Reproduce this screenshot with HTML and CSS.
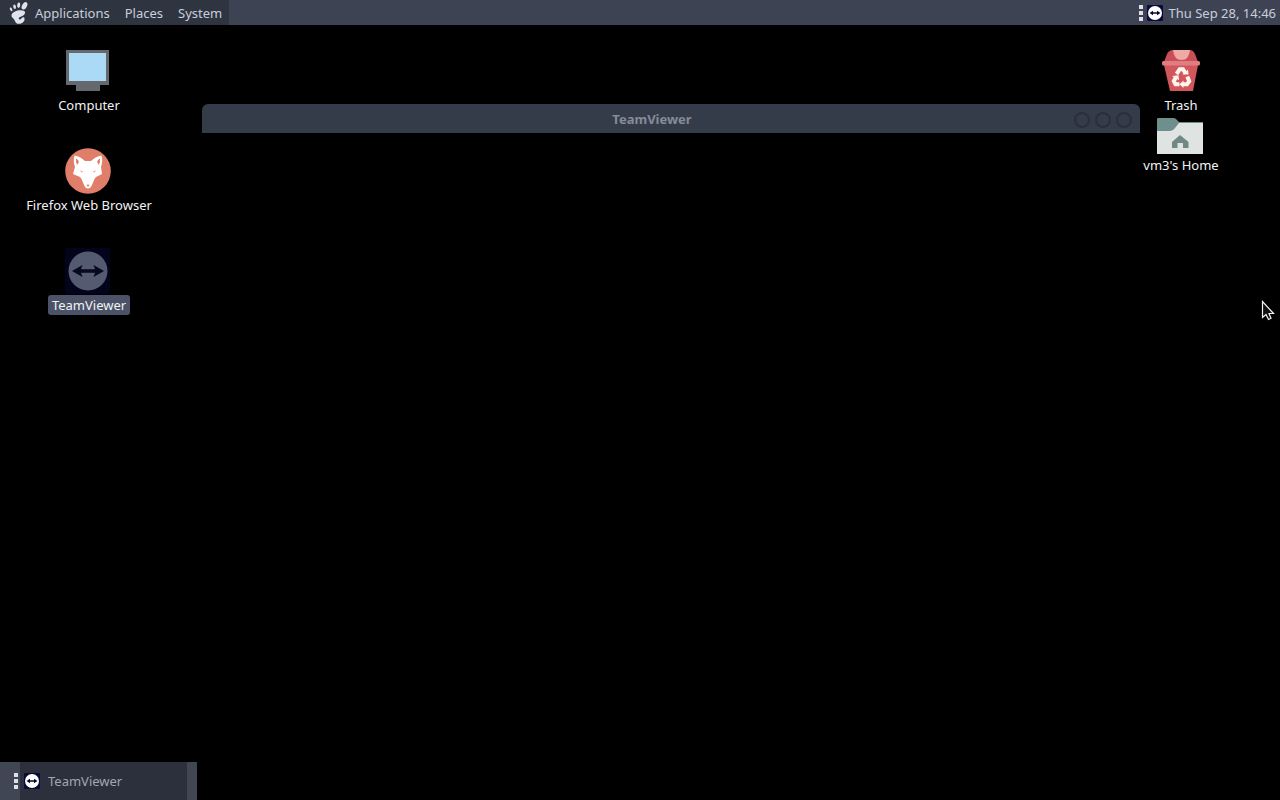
FILE: index.html
```html
<!DOCTYPE html>
<html lang="en">
<head>
<meta charset="utf-8">
<title>Desktop</title>
<link rel="stylesheet" href="styles.css">
</head>
<body>
<svg class="defs" aria-hidden="true">
  <symbol id="tv" viewBox="0 0 16 16">
    <rect width="16" height="16" rx="1" fill="#080a3c"/>
    <circle cx="8" cy="8" r="7" fill="#fff"/>
    <path d="M2.500 8 6 5.700V7.200H10V5.700L13.500 8 10 10.300V8.800H6V10.300Z" fill="#080a2c"/>
  </symbol>
</svg>
<header class="panel">
  <nav class="menus">
    <button class="menu menu-main" type="button">
      <svg class="foot" viewBox="0 0 22 24" aria-hidden="true">
        <g fill="#dfe3ec">
          <ellipse cx="16.500" cy="4.800" rx="2.400" ry="4" transform="rotate(28 16.500 4.800)"/>
          <ellipse cx="10.700" cy="4.200" rx="1.500" ry="2.700" transform="rotate(8 10.700 4.200)"/>
          <ellipse cx="6.600" cy="5.800" rx="1.300" ry="2.300" transform="rotate(-12 6.600 5.800)"/>
          <ellipse cx="3.100" cy="8.400" rx="1.100" ry="2" transform="rotate(-25 3.100 8.400)"/>
          <path d="M15.800 9.800C12.500 8 3.500 10.200 3.500 14.500C3.500 17 6 17.300 6.700 19.500C7.500 22 9 23 11.300 22.800C14.500 22.600 17 20 16.500 17.400C16.200 15.900 14.600 16 13.600 17.200C12.500 18.500 11.400 18.800 10.800 17.800C9.800 16 16.200 15.500 17 12.300C17.300 11.100 16.800 10.300 15.800 9.800Z"/>
        </g>
      </svg>
      Applications
    </button>
    <button class="menu" type="button">Places</button>
    <button class="menu" type="button">System</button>
  </nav>
  <div class="tray">
    <span class="grip"><i></i><i></i><i></i></span>
    <button class="tray-icon" type="button" aria-label="TeamViewer"><svg viewBox="0 0 16 16"><use href="#tv"/></svg></button>
    <time class="clock">Thu Sep 28, 14:46</time>
  </div>
</header>
<main class="desktop">
  <div class="icons icons-left">
    <button class="shortcut" type="button">
      <svg viewBox="2 0 48 48" aria-hidden="true">
        <path d="M13 38h24v6H13z" fill="#65696f"/>
        <rect x="3" y="3" width="43" height="35" fill="#65696f"/>
        <rect x="6" y="6" width="37" height="28" fill="#aadaf5"/>
      </svg>
      <span class="label">Computer</span>
    </button>
    <button class="shortcut" type="button">
      <svg viewBox="2 0 48 48" aria-hidden="true">
        <circle cx="25" cy="24" r="22.800" fill="#e07e6a"/>
        <path d="M11.500 8.500C15 9 19 11 22 14H28C31 11 35 9 38.500 8.500C39.500 12 39.500 16 38 20L39 27L33 30C31 32 30 36 29 38C28 40.500 26.500 41.500 25 41.500C23.500 41.500 22 40.500 21 38C20 36 19 32 17 30L10 27L12 20C10.500 16 10.500 12 11.500 8.500Z" fill="#fff"/>
        <path d="M13 11.500Q15.500 12.500 16 15L14 18Q12.700 15 13 11.500ZM37 11.500Q34.500 12.500 34 15L36 18Q37.300 15 37 11.500ZM17 23.500L20.500 25L18.500 25.200ZM33 23.500L29.500 25L31.500 25.200ZM23.500 38Q25 37 26.500 38L25 40Z" fill="#e07e6a"/>
      </svg>
      <span class="label">Firefox Web Browser</span>
    </button>
    <button class="shortcut" type="button">
      <svg viewBox="2 0 48 48" aria-hidden="true">
        <rect x="2" y="1" width="45" height="46" rx="3" fill="#03041b"/>
        <circle cx="25" cy="24" r="19.500" fill="#545a70"/>
        <path d="M9 24 19.500 18 18 22.200H32L30.500 18 41 24 30.500 30 32 25.800H18L19.500 30Z" fill="#060920"/>
      </svg>
      <span class="label selected">TeamViewer</span>
    </button>
  </div>
  <div class="icons icons-right">
    <button class="shortcut" type="button">
      <svg viewBox="1 0 48 48" aria-hidden="true">
        <path d="M8 15 11 7Q13 3 17 3H34Q37 3 39 7L42 15Z" fill="#c94f57"/>
        <path d="M17 3H34Q33 13 25.500 13Q18 13 17 3Z" fill="#efaaa3"/>
        <path d="M8 18H42L37 44H14Z" fill="#d2575d"/>
        <rect x="6" y="14" width="38" height="4.500" rx="1.500" fill="#df7d80"/>
        <g fill="none" stroke="#fff5ed" stroke-width="4">
          <path d="M20.500 27 23.700 22.300H27L29.600 26.500"/>
          <path d="M31.300 29.500 33.200 34.200 31 37.300H27"/>
          <path d="M23.500 37.300H19.500L17.800 34 19.800 30.500"/>
        </g>
        <path d="M26.500 27.500H32.500L32 22.500ZM27.500 33.500V41L23.500 37.300ZM16 29 22.500 28.200 23 33.200Z" fill="#fff5ed"/>
      </svg>
      <span class="label">Trash</span>
    </button>
    <button class="shortcut" type="button">
      <svg viewBox="2 0 48 48" aria-hidden="true">
        <path d="M2 15H48V47H2Z" fill="#dfe3e2"/>
        <path d="M2 12Q2 11 4 11H18Q20 11 21 12L24 15H48V16H24L20 21Q18 24 14 24H2Z" fill="#6e8f8e"/>
        <path d="M25 28 33.500 35V41H28V36H22.500V41H17V35Z" fill="#708987"/>
      </svg>
      <span class="label">vm3's Home</span>
    </button>
  </div>
  <section class="window" aria-label="TeamViewer">
    <h1 class="window-title">TeamViewer</h1>
    <div class="window-controls">
      <button type="button" aria-label="Minimize"></button>
      <button type="button" aria-label="Maximize"></button>
      <button type="button" aria-label="Close"></button>
    </div>
  </section>
  <svg class="cursor" viewBox="0 0 14 22" aria-hidden="true">
    <path d="M1.500 1.500V17.500L5 14.500L7.500 19.500L10 18.300L8 13.500H12.500Z" fill="#111" stroke="#f4f4f4" stroke-width="1.200"/>
  </svg>
</main>
<footer class="taskbar">
  <span class="grip"><i></i><i></i><i></i></span>
  <button class="task" type="button"><svg viewBox="0 0 16 16" aria-hidden="true"><use href="#tv"/></svg>TeamViewer</button>
</footer>
</body>
</html>
```

FILE: styles.css
```css
* {
  box-sizing: border-box;
}

body {
  margin: 0;
  min-height: 100vh;
  display: flex;
  flex-direction: column;
  background: #000;
  color: #f2f2f2;
  font: 13px/20px "Noto Sans", sans-serif;
}

button {
  margin: 0;
  padding: 0;
  border: 0;
  background: none;
  color: inherit;
  font: inherit;
}

.defs {
  position: absolute;
  width: 0;
  height: 0;
}

.panel {
  display: flex;
  justify-content: space-between;
  height: 25px;
  background: #3e4353;
  color: #c9cedb;
}

.menus {
  display: flex;
  gap: 15px;
  padding: 0 7px 0 8px;
  background: #2e3440;
}

.menu {
  display: flex;
  align-items: center;
  padding-top: 1px;
}

.menu-main {
  gap: 5px;
}

.foot {
  width: 22px;
  height: 24px;
}

.tray {
  display: flex;
  align-items: center;
  padding-right: 4px;
}

.grip {
  display: grid;
  gap: 2px;
}

.grip i {
  width: 4px;
  height: 4px;
  background: #dde0e8;
}

.tray-icon {
  display: flex;
  margin: 0 6px 0 4px;
}

.tray-icon svg {
  width: 16px;
  height: 16px;
}

.clock {
  padding-top: 1px;
}

.desktop {
  position: relative;
  flex: 1;
  display: flex;
  justify-content: space-between;
  padding: 22px 29px 0 19px;
}

.icons {
  display: flex;
  flex-direction: column;
  width: 140px;
}

.icons-left {
  gap: 32px;
}

.shortcut {
  display: flex;
  flex-direction: column;
  align-items: center;
}

.shortcut svg {
  width: 48px;
  height: 48px;
}

.icons-right .shortcut + .shortcut {
  margin-top: -8px;
}

.label {
  padding: 0 4px;
  border-radius: 3px;
  white-space: nowrap;
}

.selected {
  background: #4c5267;
}

.window {
  position: absolute;
  top: 79px;
  left: 202px;
  right: 140px;
  display: flex;
  align-items: center;
  height: 29px;
  padding: 0 8px 0 28px;
  border-radius: 6px 6px 0 0;
  background: #353c49;
}

.window-title {
  flex: 1;
  margin: 0;
  color: #858b98;
  font-size: 13px;
  font-weight: 700;
  line-height: 20px;
  text-align: center;
}

.window-controls {
  display: flex;
  gap: 5px;
  padding-top: 2px;
}

.window-controls button {
  width: 16px;
  height: 16px;
  border: 2px solid #292f3c;
  border-radius: 50%;
}

.cursor {
  position: absolute;
  top: 275px;
  right: 5px;
  width: 14px;
  height: 22px;
}

.taskbar {
  display: flex;
  align-items: center;
  align-self: flex-start;
  height: 38px;
  padding: 0 10px 0 14px;
  background: #404653;
}

.taskbar .grip {
  width: 6px;
}

.task {
  display: flex;
  align-items: center;
  gap: 8px;
  width: 167px;
  height: 38px;
  padding-left: 4px;
  background: #2b303c;
  color: #a2a7b2;
  text-align: left;
}

.task svg {
  width: 16px;
  height: 16px;
}
```
